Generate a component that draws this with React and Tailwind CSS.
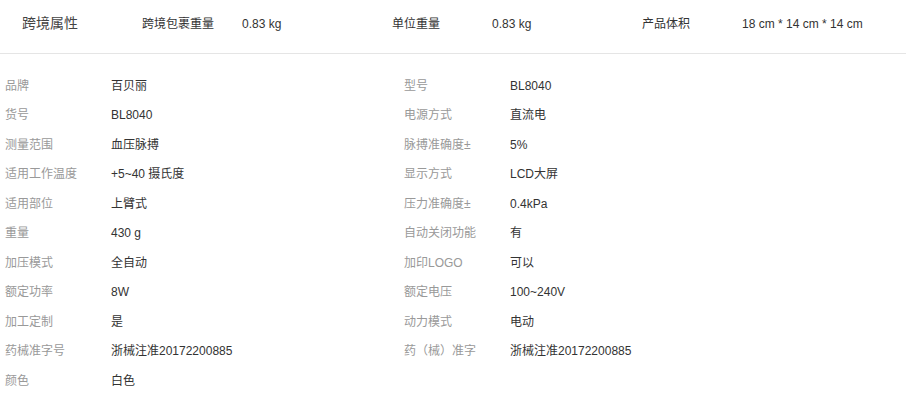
const header = [
  ['跨境包裹重量', '0.83 kg'],
  ['单位重量', '0.83 kg'],
  ['产品体积', '18 cm * 14 cm * 14 cm'],
]

const rows = [
  [['品牌', '百贝丽'], ['型号', 'BL8040']],
  [['货号', 'BL8040'], ['电源方式', '直流电']],
  [['测量范围', '血压脉搏'], ['脉搏准确度±', '5%']],
  [['适用工作温度', '+5~40 摄氏度'], ['显示方式', 'LCD大屏']],
  [['适用部位', '上臂式'], ['压力准确度±', '0.4kPa']],
  [['重量', '430 g'], ['自动关闭功能', '有']],
  [['加压模式', '全自动'], ['加印LOGO', '可以']],
  [['额定功率', '8W'], ['额定电压', '100~240V']],
  [['加工定制', '是'], ['动力模式', '电动']],
  [['药械准字号', '浙械注准20172200885'], ['药（械）准字', '浙械注准20172200885']],
  [['颜色', '白色'], null],
]

export default function App() {
  return (
    <div className="w-[906px] h-[399px] bg-white overflow-hidden font-['Liberation_Sans','Noto_Sans_CJK_SC',sans-serif]">
      {/* 跨境属性 */}
      <div className="flex items-center h-[54px] border-b border-[#e5e5e5]">
        <div className="w-[142px] pl-[22px] pb-[6px] text-[14px] text-[#444]">跨境属性</div>
        {header.map(([k, v]) => (
          <div key={k} className="flex w-[250px] pb-[6px] text-[12px]">
            <span className="w-[100px] text-[#333]">{k}</span>
            <span className="text-[#333]">{v}</span>
          </div>
        ))}
      </div>

      <div className="pt-[17px] pl-[5px]">
        {rows.map((row, i) => (
          <div key={i} className="flex h-[29.5px] items-center text-[12px]">
            {row.map((cell, j) => (
              <div key={j} className="flex w-[399px]">
                {cell && (
                  <>
                    <span className="w-[106px] text-[#999]">{cell[0]}</span>
                    <span className="text-[#333]">{cell[1]}</span>
                  </>
                )}
              </div>
            ))}
          </div>
        ))}
      </div>
    </div>
  )
}
